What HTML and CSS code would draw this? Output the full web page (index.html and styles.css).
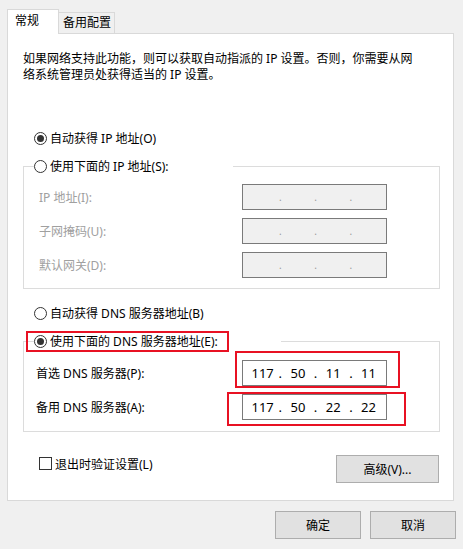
FILE: index.html
```html
<!DOCTYPE html>
<html lang="zh-CN">
<head>
    <meta charset="UTF-8">
    <title>Internet 协议版本 4 (TCP/IPv4) 属性</title>
    <link rel="stylesheet" href="styles.css">
</head>
<body>
    <div class="dialog">
        <div class="tabs">
            <div class="tab active">常规</div>
            <div class="tab">备用配置</div>
        </div>
        <div class="panel">
            <p class="desc">如果网络支持此功能，则可以获取自动指派的 IP 设置。否则，你需要从网络系统管理员处获得适当的 IP 设置。</p>

            <div class="option"><span class="radio checked"></span>自动获得 IP 地址(O)</div>
            <fieldset class="group group-ip">
                <legend class="option"><span class="radio"></span>使用下面的 IP 地址(S):</legend>
                <div class="row disabled">
                    <span class="row-label">IP 地址(I):</span>
                    <div class="ip-box"><span class="octet"></span><span class="dot">.</span><span class="octet"></span><span class="dot">.</span><span class="octet"></span><span class="dot">.</span><span class="octet"></span></div>
                </div>
                <div class="row disabled">
                    <span class="row-label">子网掩码(U):</span>
                    <div class="ip-box"><span class="octet"></span><span class="dot">.</span><span class="octet"></span><span class="dot">.</span><span class="octet"></span><span class="dot">.</span><span class="octet"></span></div>
                </div>
                <div class="row disabled">
                    <span class="row-label">默认网关(D):</span>
                    <div class="ip-box"><span class="octet"></span><span class="dot">.</span><span class="octet"></span><span class="dot">.</span><span class="octet"></span><span class="dot">.</span><span class="octet"></span></div>
                </div>
            </fieldset>

            <div class="option option-dns"><span class="radio"></span>自动获得 DNS 服务器地址(B)</div>
            <fieldset class="group group-dns">
                <legend class="option"><span class="radio checked"></span>使用下面的 DNS 服务器地址(E):</legend>
                <div class="row">
                    <span class="row-label">首选 DNS 服务器(P):</span>
                    <div class="ip-box"><span class="octet">117</span><span class="dot">.</span><span class="octet">50</span><span class="dot">.</span><span class="octet">11</span><span class="dot">.</span><span class="octet">11</span></div>
                </div>
                <div class="row">
                    <span class="row-label">备用 DNS 服务器(A):</span>
                    <div class="ip-box"><span class="octet">117</span><span class="dot">.</span><span class="octet">50</span><span class="dot">.</span><span class="octet">22</span><span class="dot">.</span><span class="octet">22</span></div>
                </div>
            </fieldset>

            <div class="panel-foot">
                <div class="check"><span class="checkbox"></span>退出时验证设置(L)</div>
                <button class="btn btn-adv">高级(V)...</button>
            </div>
        </div>
        <div class="footer">
            <button class="btn">确定</button>
            <button class="btn">取消</button>
        </div>

        <!-- red highlight marks -->
        <div class="mark mark-legend"></div>
        <div class="mark mark-dns1"></div>
        <div class="mark mark-dns2"></div>
    </div>
</body>
</html>
```

FILE: styles.css
```css
body {
    margin: 0;
    background: #f0f0f0;
    font-family: "Noto Sans", "Noto Sans CJK SC", sans-serif;
    font-size: 12px;
    color: #000;
}

.dialog {
    position: relative;
    width: 463px;
    height: 549px;
    box-sizing: border-box;
    padding: 9px 0 0 7px;
}

/* tabs */
.tabs {
    display: flex;
    align-items: flex-end;
    height: 24px;
}

.tab {
    box-sizing: border-box;
    width: 57px;
    height: 21px;
    margin-left: -1px;
    padding-left: 4px;
    border: 1px solid #d9d9d9;
    border-bottom: none;
    background: #f0f0f0;
    line-height: 20px;
}

.tab.active {
    position: relative;
    z-index: 1;
    width: 52px;
    height: 25px;
    margin-left: 0;
    margin-bottom: -1px;
    padding-left: 7px;
    background: #fff;
    line-height: 22px;
}

/* main panel */
.panel {
    box-sizing: border-box;
    width: 447px;
    height: 468px;
    padding: 17px 13px 0 15px;
    border: 1px solid #d9d9d9;
    background: #fff;
}

.desc {
    width: 396px;
    margin: 0;
    line-height: 16px;
}

.option {
    display: flex;
    align-items: center;
    height: 17px;
    line-height: 17px;
    white-space: nowrap;
}

.panel > .option {
    margin: 47px 0 0 11px;
}

.panel > .option-dns {
    margin-top: 16px;
}

.radio {
    position: relative;
    flex: none;
    box-sizing: border-box;
    width: 13px;
    height: 13px;
    margin-right: 3px;
    border: 1px solid #333;
    border-radius: 50%;
    background: #fff;
}

.radio.checked::after {
    content: "";
    position: absolute;
    left: 2px;
    top: 2px;
    width: 7px;
    height: 7px;
    border-radius: 50%;
    background: #333;
}

/* group boxes */
.group {
    min-width: 0;
    margin: 11px 0 0;
    padding: 9px 0 10px;
    border: 1px solid #dcdcdc;
}

.group legend {
    margin-left: 10px;
    padding: 0;
    width: 199px;
}

.group-dns {
    padding: 10px 0 11px;
}

.group-dns legend {
    width: 247px;
}

.row {
    display: flex;
    align-items: center;
    height: 26px;
}

.row + .row {
    margin-top: 8px;
}

.row-label {
    box-sizing: border-box;
    width: 218px;
    padding-left: 15px;
}

.group-dns .row-label {
    padding-left: 12px;
}

.disabled .row-label {
    color: #a0a0a0;
}

.ip-box {
    box-sizing: border-box;
    display: flex;
    align-items: center;
    width: 145px;
    height: 26px;
    padding-left: 4px;
    border: 1px solid #7a7a7a;
    background: #fff;
    font-size: 13px;
}

.disabled .ip-box {
    background: #f0f0f0;
}

.octet {
    width: 31.3px;
    text-align: center;
}

.dot {
    width: 4px;
    text-align: center;
}

.disabled .dot {
    color: #9a9a9a;
    font-size: 10px;
}

/* bottom of panel */
.panel-foot {
    display: flex;
    justify-content: space-between;
    align-items: flex-start;
    margin-top: 23px;
}

.check {
    display: flex;
    align-items: center;
    height: 17px;
    margin-left: 16px;
}

.checkbox {
    box-sizing: border-box;
    width: 13px;
    height: 13px;
    margin-right: 3px;
    border: 1px solid #333;
    background: #fff;
}

.btn {
    box-sizing: border-box;
    height: 28px;
    padding: 0;
    border: 1px solid #adadad;
    background: #e1e1e1;
    color: #000;
    font: inherit;
}

.btn-adv {
    width: 103px;
    margin-right: 1px;
}

.footer {
    display: flex;
    justify-content: flex-end;
    gap: 9px;
    margin-top: 10px;
    padding-right: 7px;
}

.footer .btn {
    width: 86px;
}

/* red annotation boxes */
.mark {
    position: absolute;
    box-sizing: border-box;
    border: 2px solid #e81123;
}

.mark-legend {
    left: 26px;
    top: 331px;
    width: 203px;
    height: 21px;
}

.mark-dns1 {
    left: 235px;
    top: 351px;
    width: 165px;
    height: 37px;
}

.mark-dns2 {
    left: 227px;
    top: 392px;
    width: 179px;
    height: 34px;
}
```
